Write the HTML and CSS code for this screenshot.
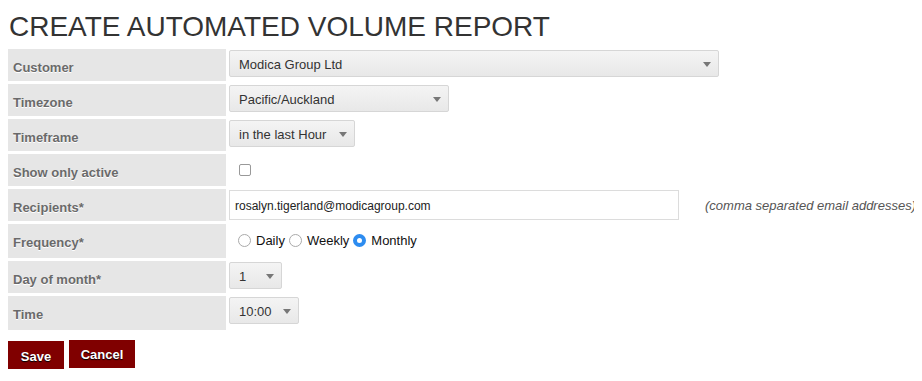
FILE: index.html
```html
<!DOCTYPE html>
<html lang="en">
  <head>
    <meta charset="UTF-8" />
    <title>Create Automated Volume Report</title>
    <link rel="stylesheet" href="styles.css">
  </head>
  <body>
    <h1 class="title">CREATE AUTOMATED VOLUME REPORT</h1>
    <form class="report">
      <div class="grid">
        <div class="label">Customer</div>
        <div class="value"><span class="select wide">Modica Group Ltd</span></div>

        <div class="label">Timezone</div>
        <div class="value"><span class="select tz">Pacific/Auckland</span></div>

        <div class="label">Timeframe</div>
        <div class="value"><span class="select tf">in the last Hour</span></div>

        <div class="label">Show only active</div>
        <div class="value"><span class="check"></span></div>

        <div class="label">Recipients*</div>
        <div class="value row">
          <span class="text-input">rosalyn.tigerland@modicagroup.com</span>
          <span class="hint">(comma separated email addresses)</span>
        </div>

        <div class="label">Frequency*</div>
        <div class="value radios">
          <span class="radio"></span><span class="opt">Daily</span>
          <span class="radio"></span><span class="opt">Weekly</span>
          <span class="radio on"></span><span class="opt">Monthly</span>
        </div>

        <div class="label">Day of month*</div>
        <div class="value"><span class="select day">1</span></div>

        <div class="label">Time</div>
        <div class="value"><span class="select time">10:00</span></div>
      </div>
      <div class="actions">
        <button type="button" class="btn save">Save</button>
        <button type="button" class="btn cancel">Cancel</button>
      </div>
    </form>
  </body>
</html>
```

FILE: styles.css
```css
body {
  margin: 8px;
  font-family: "Liberation Sans", Arial, sans-serif;
  color: #333;
  background: #fff;
}
.title {
  margin: 3px 0 0 1px;
  font-size: 28px;
  font-weight: normal;
  line-height: 32px;
  color: #333;
}
.report {
  margin-top: 6px;
}
.grid {
  display: grid;
  grid-template-columns: 218px 1fr;
  grid-template-rows: 32px 32px 32px 32px 32px 34px 32px 34px;
  gap: 3px;
}
.label {
  background: #e6e6e6;
  color: #6a6a6a;
  font-weight: bold;
  font-size: 13px;
  padding: 11px 0 0 5px;
  text-shadow: 0 1px 0 #fff;
  box-sizing: border-box;
}
.value {
  display: flex;
  align-items: flex-start;
  padding-top: 1px;
  font-size: 13px;
  color: #222;
}
.select {
  box-sizing: border-box;
  height: 27px;
  padding: 6px 0 0 9px;
  border: 1px solid #d6d6d6;
  border-radius: 2px;
  background: linear-gradient(#f4f4f4, #e8e8e8);
  color: #333;
  font-size: 13px;
  position: relative;
}
.select::after {
  content: "";
  position: absolute;
  right: 7px;
  top: 11px;
  border-left: 4px solid transparent;
  border-right: 4px solid transparent;
  border-top: 5px solid #777;
}
.wide { width: 490px; }
.tz { width: 220px; }
.tf { width: 126px; }
.day { width: 53px; }
.time { width: 70px; }
.check {
  width: 10px;
  height: 10px;
  margin: 9px 0 0 10px;
  border: 1px solid #999;
  border-radius: 2px;
  background: #fff;
}
.row {
  gap: 26px;
}
.text-input {
  box-sizing: border-box;
  flex: none;
  width: 450px;
  height: 30px;
  padding: 8px 0 0 5px;
  border: 1px solid #dcdcdc;
  background: #fff;
  font-size: 12px;
  color: #222;
}
.hint {
  white-space: nowrap;
  font-style: italic;
  font-size: 13px;
  color: #555;
  margin-top: 8px;
}
.radios {
  padding: 9px 0 0 9px;
  font-size: 13px;
  color: #111;
}
.radio {
  box-sizing: border-box;
  width: 13px;
  height: 13px;
  margin: 1px 5px 0 4px;
  border: 1px solid #aaa;
  border-radius: 50%;
  background: #fff;
}
.radio:first-child {
  margin-left: 0;
}
.radio.on {
  border: 4px solid #2d8cf0;
}
.actions {
  display: flex;
  align-items: flex-start;
  gap: 5px;
  margin-top: 10px;
}
.btn {
  border: none;
  background: #800000;
  color: #fff;
  font-family: "Liberation Sans", Arial, sans-serif;
  font-weight: bold;
  font-size: 13px;
  text-shadow: 0 1px 1px #000;
  height: 28px;
  padding: 0;
}
.save { width: 56px; margin-top: 1px; padding-top: 2px; }
.cancel { width: 66px; }
```
